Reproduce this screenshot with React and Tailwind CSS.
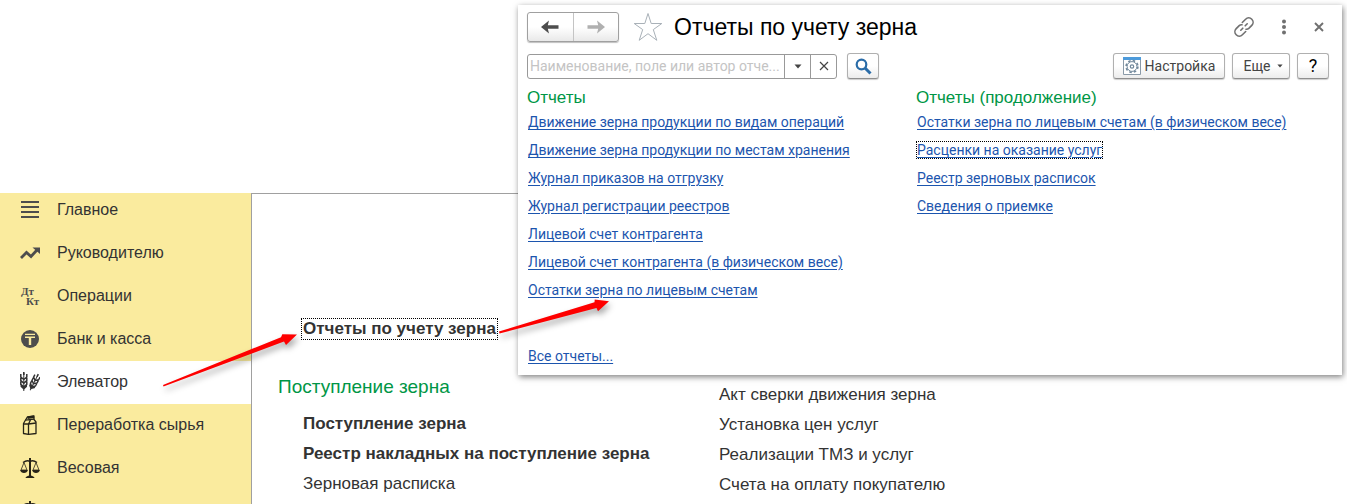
import React from 'react';

const sections = [
  { label: 'Главное', icon: MenuIcon },
  { label: 'Руководителю', icon: TrendIcon },
  { label: 'Операции', icon: DebitCreditIcon },
  { label: 'Банк и касса', icon: TengeIcon },
  { label: 'Элеватор', icon: WheatIcon, active: true },
  { label: 'Переработка сырья', icon: BagIcon },
  { label: 'Весовая', icon: ScalesIcon },
  { label: '', icon: ScalesIcon },
];

const reports = [
  'Движение зерна продукции по видам операций',
  'Движение зерна продукции по местам хранения',
  'Журнал приказов на отгрузку',
  'Журнал регистрации реестров',
  'Лицевой счет контрагента',
  'Лицевой счет контрагента (в физическом весе)',
  'Остатки зерна по лицевым счетам',
];

const moreReports = [
  'Остатки зерна по лицевым счетам (в физическом весе)',
  'Расценки на оказание услуг',
  'Реестр зерновых расписок',
  'Сведения о приемке',
];

function MenuIcon() {
  return (
    <svg width="20" height="20" viewBox="0 0 20 20" fill="#4d4d4d">
      <path d="M1 1h18v2H1zM1 6h18v2H1zM1 11h18v2H1zM1 16h18v2H1z" />
    </svg>
  );
}

function TrendIcon() {
  return (
    <svg width="20" height="20" viewBox="0 0 20 20" fill="none" stroke="#4d4d4d">
      <path d="M1 15 6.5 9.5 11 13.5 17 7" strokeWidth="2.8" />
      <path d="M12.5 4.5H20V11z" fill="#4d4d4d" stroke="none" />
    </svg>
  );
}

function DebitCreditIcon() {
  return (
    <svg width="20" height="20" viewBox="0 0 20 20" fill="#4d4d4d" fontFamily="Liberation Serif, serif" fontWeight="bold" fontSize="11">
      <text x="1" y="9">Дт</text>
      <text x="6" y="19">Кт</text>
    </svg>
  );
}

function TengeIcon() {
  return (
    <svg width="20" height="20" viewBox="0 0 20 20">
      <circle cx="10" cy="10" r="9" fill="#4d4d4d" />
      <path d="M5 5.4h10M5 8.3h10" stroke="#faeb9e" strokeWidth="1.4" />
      <path d="M10 8.3V16" stroke="#faeb9e" strokeWidth="2.4" />
    </svg>
  );
}

function Ear() {
  return (
    <g>
      <path d="M0 1v18" strokeWidth="1" />
      <path d="M-3 2v3l3 2.5 3-2.5V2M-3 5.7v3l3 2.5 3-2.5v-3M-3 9.4v3l3 2.5 3-2.5v-3M-2.5 13v1.5L0 16.8l2.5-2.3V13" strokeWidth="1.5" />
      <path d="M0 0v3" strokeWidth="1.6" />
    </g>
  );
}

function WheatIcon() {
  return (
    <svg width="20" height="20" viewBox="0 0 20 20" fill="none" stroke="#333" strokeLinejoin="round">
      <g transform="translate(3.8 0)"><Ear /></g>
      <g transform="translate(18.3 2.2) rotate(27) scale(.95)"><Ear /></g>
    </svg>
  );
}

function BagIcon() {
  return (
    <svg width="20" height="20" viewBox="0 0 20 20" fill="none" stroke="#262318" strokeWidth="1.3" strokeLinejoin="round">
      <path d="M3.5 8.5V18.5L8.5 19.3 16 18.5V7L14 4.500V1L7.500 1.8 5.5 5z" />
      <path d="M3.5 9h5L16 8M8.5 9v10.500M5.5 5.2l8.500-1M8.5 9l2-4" />
      <path d="M7.5 2.7l6.500-1" strokeWidth="2.4" />
    </svg>
  );
}

function ScalesIcon() {
  return (
    <svg width="20" height="20" viewBox="0 0 20 20" fill="none" stroke="#262318">
      <path d="M10 0v18" strokeWidth="2" />
      <path d="M3 4.5Q7 1.5 10 3.5 13 1.5 17 4.5" strokeWidth="1.4" />
      <path d="M4 4.5 1 12h6zM16 4.5 13 12h6z" strokeWidth=".8" />
      <path d="M0 12h8Q7 15 4 15T0 12zM12 12h8q-1 3-4 3t-4-3zM5.5 20q.5-2 4.5-2.5 4 .5 4.5 2.5z" fill="#262318" stroke="none" />
    </svg>
  );
}

function ArrowIcon({ className }) {
  return (
    <svg className={className} width="18" height="14" viewBox="0 0 18 14" fill="currentColor">
      <path d="M0 7 8 .5 6.8 5.3H17.5v3.4H6.8L8 13.5z" />
    </svg>
  );
}

function StarIcon() {
  return (
    <svg width="30" height="30" viewBox="0 0 30 30" fill="none" stroke="#a9b1b8" strokeWidth="1">
      <path d="M15 1.5 18.2 11.5H28.8L20.3 17.6 23.8 28.3 15 21.7 6.2 28.3 9.7 17.6 1.2 11.5H11.8z" />
    </svg>
  );
}

function LinkIcon() {
  return (
    <svg width="20" height="20" viewBox="0 0 20 20" fill="none" stroke="#707070" strokeWidth="1.6" strokeLinecap="round">
      <path d="M8.3 5.5 11.6 2.2a4.2 4.2 0 0 1 6.2 6.2L14.8 11.4Q13.5 12.5 12 12.2" />
      <path d="M11.7 14.5 8.4 17.8a4.2 4.2 0 0 1-6.2-6.2L5.2 8.6Q6.5 7.5 8 7.8" />
      <path d="M6.8 13.2l2-2M11.2 8.8l2-2" />
    </svg>
  );
}

function GearWindowIcon() {
  return (
    <svg width="18" height="18" viewBox="0 0 18 18">
      <path d="M.5.5h17v17H.5z" fill="#fff" stroke="#8a9aa8" />
      <path d="M0 0h18v3H0z" fill="#4d9bdb" />
      <circle cx="9" cy="9.5" r="5.9" fill="none" stroke="#71889b" strokeWidth="1.6" strokeDasharray="2.5 2.134" />
      <circle cx="9" cy="9.5" r="4.9" fill="#fff" stroke="#71889b" />
      <circle cx="9" cy="9.5" r="1.7" fill="none" stroke="#71889b" strokeWidth="1.2" />
    </svg>
  );
}

function Caret({ small }) {
  return (
    <svg width={small ? 6 : 8} height={small ? 4 : 5} viewBox="0 0 8 5" fill="#444">
      <path d="M.5.5h7L4 4.5z" />
    </svg>
  );
}

function Report({ children, focused }) {
  return (
    <li className="flex h-7 items-center">
      <a
        href="#"
        className={
          'text-sm leading-4 whitespace-nowrap text-[#1c55ae] underline underline-offset-2 ' +
          (focused ? 'outline-1 outline-dotted outline-black' : '')
        }
      >
        {children}
      </a>
    </li>
  );
}

const button =
  'flex h-[26px] items-center justify-center rounded-[3px] border border-[#b0b0b0] border-b-[#8f8f8f] bg-linear-to-b from-white from-50% to-[#ececec] shadow-[0_1px_1px_#00000033]';

const groupTitle = "pt-px font-['Liberation_Sans',Arial,sans-serif] text-[17px] leading-5 text-[#009646]";

function ReportsWindow() {
  return (
    <section className="absolute top-[5px] right-[5px] bottom-[129px] left-[518px] flex flex-col bg-white px-[9px] font-[Roboto,sans-serif] shadow-[1px_2px_6px_#00000080]">
      <header className="flex h-11 items-center">
        <div className="flex h-[30px] w-[92px] rounded-[3px] border border-[#a0a0a0] bg-linear-to-b from-white from-50% to-[#e9e9e9] shadow-[0_1px_1px_#00000040]">
          <button aria-label="Назад" className="flex flex-1 items-center justify-center border-r border-[#c4c4c4] text-[#4d4d4d]">
            <ArrowIcon />
          </button>
          <button aria-label="Вперед" className="flex flex-1 items-center justify-center text-[#b0b0b0]">
            <ArrowIcon className="rotate-180" />
          </button>
        </div>
        <button aria-label="В избранное" className="ml-[14px]"><StarIcon /></button>
        <h1 className="ml-[11px] flex-1 font-['Liberation_Sans',Arial,sans-serif] text-[23px] leading-8 text-black">Отчеты по учету зерна</h1>
        <div className="flex items-center gap-[27px] pr-[9px]">
          <button aria-label="Ссылка"><LinkIcon /></button>
          <button aria-label="Меню">
            <svg width="6" height="16" viewBox="0 0 6 16" fill="#707070">
              <circle cx="3" cy="2.5" r="2" /><circle cx="3" cy="8" r="2" /><circle cx="3" cy="13.5" r="2" />
            </svg>
          </button>
          <button aria-label="Закрыть">
            <svg width="10" height="10" viewBox="0 0 10 10" stroke="#707070" strokeWidth="1.9">
              <path d="M1 1l8 8M9 1 1 9" />
            </svg>
          </button>
        </div>
      </header>
      <div className="mt-1 flex items-center pr-1">
        <div className="flex h-[25px] w-[310px] rounded-[3px] border border-[#999] bg-white">
          <input
            aria-label="Поиск отчета"
            placeholder="Наименование, поле или автор отче..."
            className="min-w-0 flex-1 pl-[2px] text-sm placeholder:text-[#c4c4c4]"
          />
          <button aria-label="Выбрать" className="flex w-[26px] items-center justify-center border-l border-[#999]"><Caret /></button>
          <button aria-label="Очистить" className="flex w-[26px] items-center justify-center border-l border-[#999]">
            <svg width="10" height="10" viewBox="0 0 10 10" stroke="#444" strokeWidth="1.2">
              <path d="M1 1l8 8M9 1 1 9" />
            </svg>
          </button>
        </div>
        <button aria-label="Найти" className={button + ' ml-[10px] w-8'}>
          <svg width="17" height="17" viewBox="0 0 17 17" fill="none" stroke="#2a6ca8">
            <circle cx="6.5" cy="6.5" r="4.8" strokeWidth="2.2" />
            <path d="M10 10l5.500 5.500" strokeWidth="3" />
          </svg>
        </button>
        <div className="ml-auto flex gap-[7px] text-sm text-[#444]">
          <button className={button + ' w-28 gap-1'}><GearWindowIcon />Настройка</button>
          <button className={button + ' w-[58px] gap-[6px] pl-1'}>Еще<Caret small /></button>
          <button aria-label="Справка" className={button + ' w-8 text-lg text-black'}>?</button>
        </div>
      </div>
      <div className="mt-2 grid grid-cols-[389px_1fr]">
        <div>
          <h2 className={groupTitle}>Отчеты</h2>
          <ul className="pl-px">
            {reports.map((name) => <Report key={name}>{name}</Report>)}
          </ul>
        </div>
        <div>
          <h2 className={groupTitle}>Отчеты (продолжение)</h2>
          <ul className="pl-px">
            {moreReports.map((name, i) => <Report key={name} focused={i === 1}>{name}</Report>)}
          </ul>
        </div>
      </div>
      <ul className="mt-auto pb-[5px] pl-px"><Report>Все отчеты...</Report></ul>
    </section>
  );
}

function Command({ children, bold }) {
  return (
    <li className="flex h-[30px] items-center">
      <a href="#" className={bold ? 'font-bold' : ''}>{children}</a>
    </li>
  );
}

export default function App() {
  return (
    <div className="relative flex h-screen overflow-hidden bg-white pt-[193px] pr-[5px] font-['Liberation_Sans',Arial,sans-serif] text-base text-[#333]">
      <nav className="w-[251px] shrink-0 overflow-hidden bg-[#faeb9e]">
        <ul className="-mt-1">
          {sections.map(({ label, icon: Icon, active }, i) => (
            <li key={i} className={active ? 'bg-white' : ''}>
              <a href="#" aria-label={label || 'Раздел'} className="flex h-[43px] items-center gap-[17px] pb-[2px] pl-5">
                <Icon />
                {label}
              </a>
            </li>
          ))}
        </ul>
      </nav>
      <main className="grid flex-1 grid-cols-[441px_1fr] border-t border-l border-[#a0a0a0] pl-[26px] text-[17px] whitespace-nowrap">
        <div className="pt-[125px]">
          <a href="#" className="ml-6 block w-fit px-px leading-5 font-bold outline-1 outline-dotted outline-black">Отчеты по учету зерна</a>
          <h2 className="mt-[34px] text-[19px] leading-7 text-[#009646]">Поступление зерна</h2>
          <ul className="mt-2 pl-[25px]">
            <Command bold>Поступление зерна</Command>
            <Command bold>Реестр накладных на поступление зерна</Command>
            <Command>Зерновая расписка</Command>
          </ul>
        </div>
        <ul className="pt-[186px]">
          <Command>Акт сверки движения зерна</Command>
          <Command>Установка цен услуг</Command>
          <Command>Реализации ТМЗ и услуг</Command>
          <Command>Счета на оплату покупателю</Command>
        </ul>
      </main>
      <ReportsWindow />
      <svg
        className="pointer-events-none absolute top-[280px] left-[150px] drop-shadow-[2px_4px_3px_#00000059]"
        width="480" height="120" viewBox="150 280 480 120" fill="#fe0000" aria-hidden="true"
      >
        <path d="M163 385 281 337.2 282.3 334.3 297 334.5 286 345 284 341.5 163.5 386.5z" />
        <path d="M499 331.5 594.5 302.3 594.7 299.5 609 301.3 598 311.3 596.5 308 499.5 333.5z" />
      </svg>
    </div>
  );
}
